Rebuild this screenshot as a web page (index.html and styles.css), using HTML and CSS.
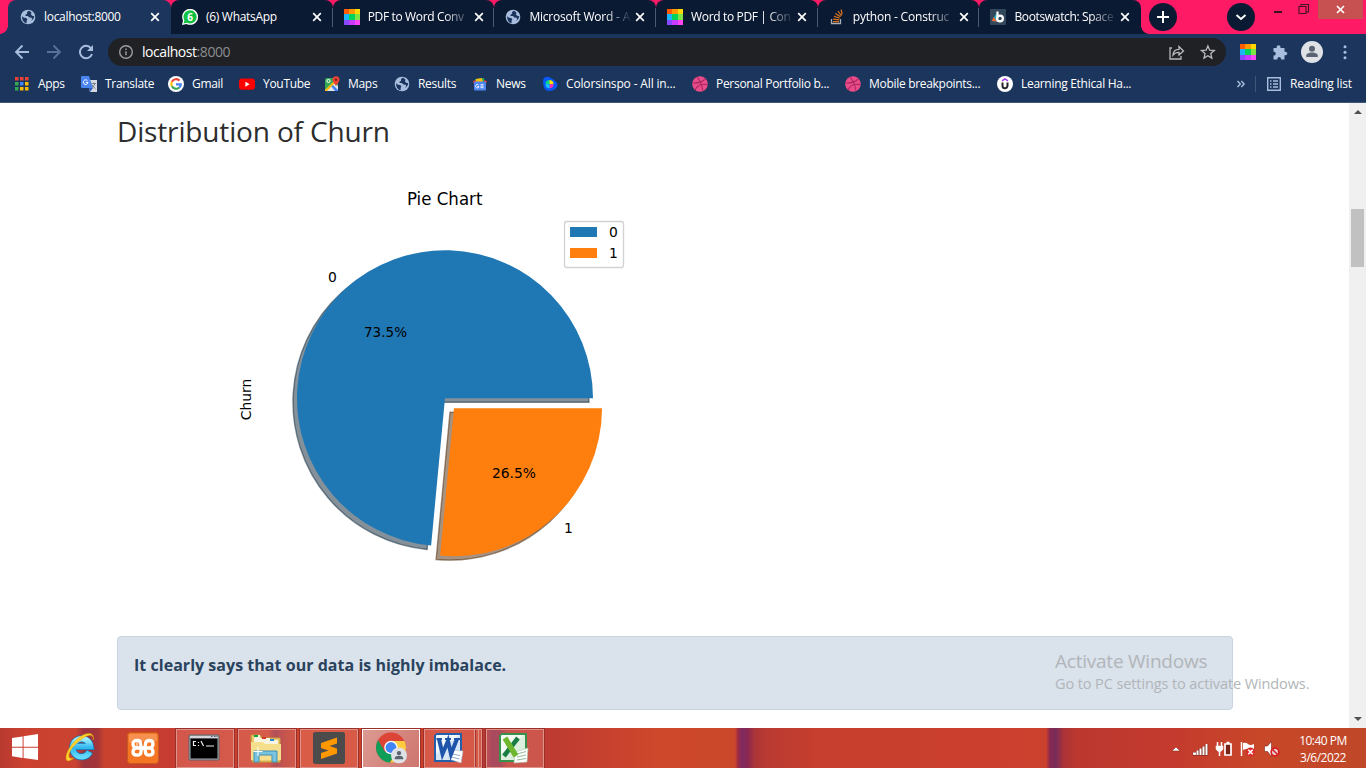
FILE: index.html
```html
<!DOCTYPE html>
<html lang="en">
<head>
<meta charset="utf-8">
<title>localhost:8000</title>
<link rel="stylesheet" href="styles.css">
</head>
<body>
<svg class="defs" width="0" height="0" aria-hidden="true">
  <symbol id="globe" viewBox="0 0 16 16"><circle cx="8" cy="8" r="7.3" fill="#a9bede"/><path d="M2.1 7.2 4 8.7l2.2.2 1.2 1.5-.8 1.4v2.4C3.7 13.7 1.9 11 2.1 7.2zM8.6 1.8 7 3.3l.2 1.5-1.8.9.3 1.2 2.2.2 1.5 1.5 2.2.2.7 1.5-1.4 1.5c1.8-.5 3.2-2.4 3.4-4.5l-2.1-.6-1.4-1.4.8-1.3-1.3-1.6z" fill="#1b355c"/></symbol>
  <symbol id="close" viewBox="0 0 10 10"><path d="M1.2 1.2 8.8 8.8M8.8 1.2 1.2 8.8" stroke="#fff" stroke-width="1.7"/></symbol>
  <symbol id="smallpdf" viewBox="0 0 16 16"><path fill="#ff5a00" d="M0 0h5v5H0z"/><path fill="#ff9900" d="M5 0h6v5H5z"/><path fill="#ffd800" d="M11 0h5v5h-5z"/><path fill="#19b5fe" d="M0 5h5v6H0z"/><path fill="#00d45a" d="M5 5h6v6H5z"/><path fill="#80e544" d="M11 5h5v6h-5z"/><path fill="#8748ff" d="M0 11h5v5H0z"/><path fill="#c93cff" d="M5 11h6v5H5z"/><path fill="#ff45f5" d="M11 11h5v5h-5z"/></symbol>
  <symbol id="dribbble" viewBox="0 0 16 16"><circle cx="8" cy="8" r="7.8" fill="#ea4c89"/><path d="M5 1c3 3.500 5 8 5.800 13.500M.6 7c5 .2 9.500-.8 12.600-4M3 13.800C5.500 9.200 10 7.500 15.300 8.600" fill="none" stroke="#a82760" stroke-width="1.100"/></symbol>
  <symbol id="person" viewBox="0 0 22 22"><circle cx="11" cy="11" r="11" fill="#dee1e6"/><circle cx="11" cy="7.700" r="3" fill="#5b6472"/><path d="M5.200 16v-1.500c0-2 3-3 5.800-3s5.800 1 5.800 3V16z" fill="#5b6472"/></symbol>
</svg>

<header class="browser">
  <div class="tabstrip">
    <div class="tab active"><svg class="ico"><use href="#globe"/></svg><span class="t">localhost:8000</span><svg class="x"><use href="#close"/></svg></div>
    <div class="tab"><svg class="ico" viewBox="0 0 16 16"><path d="M0 16 1 11.500A8 8 0 1 1 4.500 15z" fill="#fff"/><path d="M1.500 14.500 2.400 11.300A6.600 6.600 0 1 1 4.900 13.700z" fill="#12c143"/><text x="8" y="11.800" text-anchor="middle" class="badge">6</text></svg><span class="t">(6) WhatsApp</span><svg class="x"><use href="#close"/></svg></div>
    <div class="tab"><svg class="ico"><use href="#smallpdf"/></svg><span class="t fade">PDF to Word Conv</span><svg class="x"><use href="#close"/></svg></div>
    <div class="tab"><svg class="ico"><use href="#globe"/></svg><span class="t fade wide">Microsoft Word - A</span><svg class="x"><use href="#close"/></svg></div>
    <div class="tab"><svg class="ico"><use href="#smallpdf"/></svg><span class="t fade">Word to PDF | Con</span><svg class="x"><use href="#close"/></svg></div>
    <div class="tab"><svg class="ico" viewBox="0 0 16 16"><path d="M2.500 10v4.500h9V10" fill="none" stroke="#a9adb5" stroke-width="1.300"/><path d="M4 12.600h6M4.200 10.100l6 .7M4.900 7.300l5.700 1.800M6.500 4.500l5 3.300M9 2l3.500 4.800M12 .5l1.200 5" stroke="#d9731e" stroke-width="1.200"/></svg><span class="t fade wide">python - Construc</span><svg class="x"><use href="#close"/></svg></div>
    <div class="tab last"><svg class="ico" viewBox="0 0 16 16"><rect width="16" height="16" rx="1" fill="#33475b"/><path d="M7 3 2 12l5 .5z" fill="#2aa6b8"/><path d="m2 12 1.500-4L7 12.500z" fill="#f26531"/><path d="M7.500 2.500v7" stroke="#fff" stroke-width="2.200"/><circle cx="10" cy="9.500" r="2.900" fill="none" stroke="#fff" stroke-width="2.200"/></svg><span class="t fade">Bootswatch: Space</span><svg class="x"><use href="#close"/></svg></div>
    <svg class="round plus" viewBox="0 0 28 28"><circle cx="14" cy="14" r="14"/><path d="M14 8v12M8 14h12" stroke="#fff" stroke-width="2"/></svg>
    <svg class="round" viewBox="0 0 28 28"><circle cx="14" cy="14" r="14"/><path d="m9.500 12 4.500 4 4.500-4" fill="none" stroke="#fff" stroke-width="1.800"/></svg>
    <svg class="winbtns" viewBox="0 0 97 34"><path d="M5 12h8" stroke="#3a1320" stroke-width="2"/><path d="M30 6.500h7v7h-7zM32 6V4.500h7.500V12H37" fill="none" stroke="#45131f" stroke-width="1.100"/><path fill="#c75050" d="M49 0h45v19H49z"/><path d="m68 6 7 7m0-7-7 7" stroke="#fff" stroke-width="1.700"/></svg>
  </div>
  <div class="toolbar">
    <svg class="nav" viewBox="0 0 109 35"><g fill="none" stroke-width="1.800"><path d="M30 18H17m6.500-6.500L17 18l6.500 6.500" stroke="#a9bede"/><path d="M48 18h13m-6.500-6.500L61 18l-6.500 6.500" stroke="#58719a"/><path d="M92.200 14.500A6.200 6.200 0 1 0 93 20" stroke="#a9bede" stroke-width="2"/></g><path d="M94 11v6h-6z" fill="#a9bede"/></svg>
    <div class="omnibox">
      <svg class="info" viewBox="0 0 16 16"><circle cx="8" cy="8" r="6.300" fill="none" stroke="#9aa0a6" stroke-width="1.400"/><path d="M8 7.200v4M8 4.400V6" stroke="#9aa0a6" stroke-width="1.400"/></svg>
      <span class="url">localhost<i>:8000</i></span>
      <svg class="omni-actions" viewBox="0 0 48 20"><g fill="none" stroke="#b9bbbf" stroke-width="1.300"><path d="M4 6H2v11h11v-3"/><path d="M5 13c.3-4 2.500-5.700 6-5.700V4.500L15.500 9 11 13v-2.700c-2.600 0-4.500.7-6 2.700z"/><path d="m39.900 4 1.800 4.200 4.600.4-3.500 3 1 4.500-3.900-2.400-3.900 2.400 1-4.500-3.500-3 4.600-.4z"/></g></svg>
    </div>
    <svg class="pdf"><use href="#smallpdf"/></svg>
    <svg class="puzzle" viewBox="0 0 16 16"><path d="M1.500 4h3.200C4 .3 9 .3 8.500 4h4v3.700c3.700-.6 3.700 4 0 3.600V15.500H9c.4-3.200-4-3.200-3.600 0H1.500v-4c3 .3 3-4 0-3.600z" fill="#a9bede"/></svg>
    <svg class="avatar"><use href="#person"/></svg>
    <svg class="dots" viewBox="0 0 4 16"><circle cx="2" cy="2.700" r="1.500"/><circle cx="2" cy="8.200" r="1.500"/><circle cx="2" cy="13.700" r="1.500"/></svg>
  </div>
  <nav class="bookmarks">
    <a class="bm apps-link"><svg viewBox="0 0 16 16"><path fill="#ea4335" d="M2 1h3.500v3.500H2zM7 1h3.500v3.500H7zM12 1h3.500v3.500H12z"/><path fill="#34a853" d="M2 6h3.500v3.500H2zM2 11h3.500v3.500H2z"/><path fill="#4285f4" d="M7 6h3.500v3.500H7z"/><path fill="#fbbc05" d="M12 6h3.500v3.500H12zM7 11h3.500v3.500H7zM12 11h3.500v3.500H12z"/></svg>Apps</a>
    <a class="bm"><svg viewBox="0 0 16 16"><path fill="#d5d9df" d="M6 4h10v12H9z"/><path fill="#4a84ee" d="M1 0h7l4 12H1q-1 0-1-1V1q0-1 1-1z"/><path d="M12 12 9 16l-1-4z" fill="#2b5cc4"/><path d="M6.500 4.700A2.300 2.300 0 1 0 7 6.500H4.900" fill="none" stroke="#fff"/><path d="M10.500 7.500H15M12.700 6.500v1M14 7.500q-1 3-3 4m0-2.500q1.500 2.500 3.500 3.500" fill="none" stroke="#6d7989" stroke-width=".9"/></svg>Translate</a>
    <a class="bm"><svg viewBox="0 0 16 16"><circle cx="8" cy="8" r="8" fill="#fff"/><g fill="none" stroke-width="2.200"><path d="M11.500 4.600A4.800 4.800 0 0 0 3.900 5.700" stroke="#ea4335"/><path d="M3.900 5.700a4.800 4.800 0 0 0 0 4.600" stroke="#fbbc05"/><path d="M3.900 10.300a4.800 4.800 0 0 0 7.400 1.200" stroke="#34a853"/><path d="M8 8.300h4.800q0 2-1.500 3.200" stroke="#4285f4"/></g></svg>Gmail</a>
    <a class="bm"><svg viewBox="0 0 16 16"><rect y="2.500" width="16" height="11.300" rx="3" fill="#f00"/><path d="m6.400 5.700 4.200 2.500-4.200 2.500z" fill="#fff"/></svg>YouTube</a>
    <a class="bm"><svg viewBox="0 0 16 16"><rect x="1" y="2" width="13" height="13" rx="1.500" fill="#34a853"/><path d="M1 14 10 6l4 4v4l-1 1H2z" fill="#dfe5ea"/><path d="m8 8 6 6v1h-3L6.500 9.500z" fill="#4285f4"/><path d="m1 14 8-8 1.500 1.500L3 15H1z" fill="#fbbc05"/><path d="M12 10C9 6 8.500 5 8.500 3.800a3.500 3.500 0 0 1 7 0C15.500 5 15 6 12 10z" fill="#ea4335"/><circle cx="12" cy="3.800" r="1.200" fill="#7b1d17"/><circle cx="4.500" cy="5" r="1.600" fill="none" stroke="#fff"/></svg>Maps</a>
    <a class="bm"><svg><use href="#globe"/></svg>Results</a>
    <a class="bm"><svg viewBox="0 0 16 16"><path fill="#18a05e" d="m3 3 9-1 1 4H3z"/><path fill="#ea4335" d="m1 5 3-1v4H2z"/><path fill="#fbbc05" d="m4 3 6-1 1 4H4z"/><path fill="#d33f32" d="m12 4 3 1-1 3h-2z"/><rect x="2" y="5.500" width="12" height="9" rx="1" fill="#4d86ee"/><path d="M6.500 9A1.700 1.700 0 1 0 7 10.500H5.500M8.500 8.700h3M8.500 10.200h3M8.500 11.700h3" fill="none" stroke="#fff" stroke-width=".9"/></svg>News</a>
    <a class="bm colors"><svg viewBox="0 0 16 16"><path d="M1 5C1 1 5 0 8 1.500S15.500 6 15.500 9s-4 6-8.500 6-6-5-6-10z" fill="#0758f5"/><path d="M7.500 8.200V4a4 4 0 0 0-4 4.200z" fill="#00dd85"/><path d="M7.500 8.200V4a4 4 0 0 1 4 4.200z" fill="#ffe600"/><path d="M7.500 8.200h4a4 4 0 0 1-4 4z" fill="#ff2dbb"/><path d="M7.500 8.200h-4a4 4 0 0 0 4 4z" fill="#17c6ff"/></svg>Colorsinspo - All in...</a>
    <a class="bm"><svg><use href="#dribbble"/></svg>Personal Portfolio b...</a>
    <a class="bm"><svg><use href="#dribbble"/></svg>Mobile breakpoints...</a>
    <a class="bm"><svg viewBox="0 0 16 16"><circle cx="8" cy="8" r="8" fill="#fff"/><path d="M5.500 6.500v3.300a2.500 2.500 0 0 0 5 0V6.500" fill="none" stroke="#25252b" stroke-width="2"/><path d="m5 4.800 3-1.900 3 1.900" fill="none" stroke="#a435f0" stroke-width="1.400"/></svg>Learning Ethical Ha...</a>
    <svg class="more" viewBox="0 0 10 10"><path d="m1.500 2 2.800 3-2.800 3m3.800-6L8.100 5 5.300 8" fill="none" stroke="#a9bede" stroke-width="1.400"/></svg>
    <a class="bm reading"><svg viewBox="0 0 16 16"><path d="M1.700 1.700h12.600v12.600H1.700zM4 5h1.500M7 5h5M4 8h1.500M7 8h5M4 11h1.500M7 11h5" fill="none" stroke="#a9bede" stroke-width="1.400"/></svg>Reading list</a>
  </nav>
</header>

<div class="viewport">
  <main class="page">
    <h3>Distribution of Churn</h3>
    <svg class="chart" viewBox="117 166 576 432">
      <g fill-opacity=".5" stroke-opacity=".5" stroke-width="1.400">
        <path d="M441 402.200H589A148 148 0 1 0 427.100 549.500z" fill="#092436" stroke="#092436"/>
        <path d="M450 412.200 436.100 559.500A148 148 0 0 0 598 412.200z" fill="#4c2604" stroke="#4c2604"/>
      </g>
      <path d="M445 398.300H593A148 148 0 1 0 431.100 545.600z" fill="#1f77b4"/>
      <path d="M454 408.300 440.100 555.600A148 148 0 0 0 602 408.300z" fill="#ff7f0e"/>
      <rect x="564.500" y="221.500" width="59" height="46" rx="2.500" fill="#fff" stroke="#d2d2d2" stroke-width="1.300"/>
      <path fill="#1f77b4" d="M570 227h27v10h-27z"/><path fill="#ff7f0e" d="M570 248h27v10h-27z"/>
      <g class="lbl">
        <text x="444.700" y="204.700" class="title" textLength="75.500" lengthAdjust="spacingAndGlyphs">Pie Chart</text>
        <text x="332.300" y="282">0</text><text x="385.500" y="337" textLength="43" lengthAdjust="spacingAndGlyphs">73.5%</text>
        <text x="514" y="478" textLength="44" lengthAdjust="spacingAndGlyphs">26.5%</text><text x="568.300" y="533">1</text>
        <text x="613.500" y="237">0</text><text x="613.500" y="258">1</text>
        <text transform="translate(251 399.500) rotate(-90)">Churn</text>
      </g>
    </svg>
    <div class="alert">It clearly says that our data is highly imbalace.</div>
  </main>
  <div class="scrollbar"><i class="up"></i><i class="thumb"></i><i class="down"></i></div>
  <div class="watermark"><p>Activate Windows</p><p class="sub">Go to PC settings to activate Windows.</p></div>
</div>

<footer class="taskbar">
  <svg class="start" viewBox="0 0 28 28"><path fill="#fff" d="M0 4.200 11 2.500v10.800H0zM12 2.300 27 0v13.300H12zM0 14.300h11v10.500L0 23.200zM12 14.300h15V27l-15-2.100z"/></svg>
  <svg class="ie" viewBox="0 0 30 32"><defs><linearGradient id="ieg" x2="0" y2="1"><stop stop-color="#9ff1ff"/><stop offset=".5" stop-color="#2fb5ef"/><stop offset="1" stop-color="#65d9fb"/></linearGradient></defs><path d="M24.800 20.500A9 9 0 1 1 25.500 15.500H9" fill="none" stroke="#176eae" stroke-width="7"/><path d="M24.600 20.900A9 9 0 1 1 25.500 15.500H9" fill="none" stroke="url(#ieg)" stroke-width="5.600"/><path d="M28.300 9C30-1 18 1 9 11S-1 31 4 29.800c2-.3 4-2 5-3-8 3-6-6 1-13S29-1 28.300 9z" fill="#ffd32b" stroke="#d99a0d" stroke-width=".5"/></svg>
  <svg class="xampp" viewBox="0 0 32 32"><rect x=".5" y=".5" width="31" height="31" rx="3" fill="#f47623" stroke="#c85b19"/><path d="M2 2h28v7Q15 8 2 11z" fill="#fff" opacity=".2"/><path d="M10.500 12.500h-1M13.500 12.500v-1.500q0-2.500-3.500-2.500Q6 8.500 6 12q0 3 3 4-3 1-3 4t4 3.200q4 0 4-3.500 0-3.700 2.200-3.700t2.200-3.500q0-4 3.800-4 3.800 0 3.800 3.500 0 3-3 4 3 1 3 4t-3.800 3.200q-3.800 0-3.800-3.500 0-3.700-2.200-3.700t-2.700-3.500M9 16h4m6.500 0h3.500" fill="none" stroke="#fff" stroke-width="3.300" stroke-linejoin="round"/></svg>
  <div class="apps">
    <div class="app"><svg viewBox="0 0 32 32"><rect x="1" y="3" width="30" height="25" rx="1" fill="#a5aab1" stroke="#5e6267"/><path fill="#d2d4d8" d="M2 4h28v2H2z"/><path fill="#000" d="M2.500 6.500h27v20h-27z"/><path d="M8 9.500H5.500v4H8M10.500 10v1m0 2v1M13 9l2.500 5M18 14h8" fill="none" stroke="#eee" stroke-width="1.200"/><path d="M23 4.500h1.500m1.500 0h1.500m1 0h1" stroke="#475574"/></svg></div>
    <div class="app"><svg viewBox="0 0 32 32"><path d="M1 3h9l2 3h18v24H2z" fill="#e8c96a" stroke="#c39a38"/><path fill="#f8f4df" d="M4 3h6v3h10v2h8v5H4z"/><path fill="#17a33b" d="M4 3h4v2H4z"/><path fill="#d23b2b" d="M12 5h4v2h-4z"/><path fill="#2489d8" d="M20 7h4v2h-4z"/><path fill="#f5df8d" d="M1 10h12l2 2h16v16H1z"/><path d="M4 30V19h23v11h-5v-7H9v7z" fill="#79c3de" stroke="#3f90b5"/><path d="M8 15v9M3.500 19.500h9" stroke="#fff"/></svg></div>
    <div class="app"><svg viewBox="0 0 32 32"><rect width="32" height="32" rx="2.500" fill="#4b4b4b"/><path d="M8 11 24 5.500v6L16.500 14l7.500 2.500v5L8 27v-6l7.500-2.500L8 16z" fill="#ff9800"/></svg></div>
    <div class="app current"><svg viewBox="0 0 32 32"><circle cx="16" cy="15.500" r="15" fill="#db4437"/><path d="M3 8a15 15 0 0 0 12 22.500L22 19l-12 1z" fill="#0f9d58"/><path d="M16 9h13.500A15 15 0 0 1 15 30.500L22.500 19z" fill="#ffcd40"/><circle cx="16" cy="15.500" r="6.800" fill="#fff"/><circle cx="16" cy="15.500" r="5.400" fill="#4285f4"/><use href="#person" x="16" y="15.500" width="16" height="16"/></svg></div>
    <div class="app word"><svg viewBox="0 0 32 32"><path d="M4 2h24v25l-2 2H2V4z" fill="#d6e6f5" stroke="#255fa9" stroke-width="2"/><path d="M3 3h23L3 22z" fill="#fff" opacity=".7"/><path d="m17 18 13 1-2 12-12-4z" fill="#fff" stroke="#aebed1" stroke-width=".6"/><path d="m19 22 8 1.500M18.500 25l8 2" stroke="#8caad2"/><path d="m6 7 3.500 15L15 9l3 13 6-15" fill="none" stroke="#1e55ab" stroke-width="4"/><path d="M3.500 7H9m3 0h6m3 0h6" stroke="#1e55ab" stroke-width="2"/></svg></div>
    <div class="app excel"><svg viewBox="0 0 32 32"><path d="M4 2h24v25l-2 2H2V4z" fill="#dceedd" stroke="#36914a" stroke-width="2"/><path d="M3 3h23L3 22z" fill="#fff" opacity=".7"/><path d="m17 20 13-4-1 14-13 1z" fill="#fff" stroke="#a4c8a8" stroke-width=".6"/><path d="m19 22 9-2.500M19 25l9-2M19 28l9-1.500" stroke="#91ba96"/><path d="M20 6 6 24" stroke="#197c42" stroke-width="4.500"/><path d="m7 6 11 18" stroke="#6eb62e" stroke-width="5.500"/></svg></div>
  </div>
  <svg class="tray" viewBox="0 0 112 18"><path d="m1 11 4-4 4 4z" fill="#fff" stroke="#782418" stroke-width=".5"/><path d="M23.500 12v3.500m3-5v5m3-7v7m3-9v9m3-11.500v11.500" stroke="#782418" stroke-width="3.400"/><path d="M22 13.500h3M23.500 12.500V15m3-4.500V15m3-6.500V15m3-8.500V15m3-11v11" stroke="#fff" stroke-width="2"/><path d="M46.500 2v4m4-4v4m-5 .5h6V9l-2 2h-2l-2-2zm3 4V16" stroke="#fff" stroke-width="1.500" fill="#fff"/><path d="M54 4h6v11h-6zM55.500 2.500h3" stroke="#fff" stroke-width="1.700" fill="#782418"/><path d="M70.500 2v14" stroke="#fff" stroke-width="1.500"/><path d="M72 3q3-1 5 1t6 0v7q-3 1-5-1t-6 0z" fill="#fff"/><circle cx="79.500" cy="12" r="4.500" fill="#dc2b2b"/><path d="m77.300 9.800 4.400 4.400m0-4.400-4.400 4.400" stroke="#fff" stroke-width="1.600"/><path d="M93.500 6h3l4-4.500v15l-4-5h-3z" fill="#fff" stroke="#782418" stroke-width=".6"/><circle cx="104" cy="12" r="3.800" fill="#e8dcda" stroke="#d71e22" stroke-width="1.800"/><path d="m101.500 9.500 5 5" stroke="#d71e22" stroke-width="1.600"/></svg>
  <div class="clock"><span>10:40 PM</span><span>3/6/2022</span></div>
</footer>
</body>
</html>
```

FILE: styles.css
```css
* { box-sizing: border-box; }
body { margin: 0; width: 1366px; height: 768px; overflow: hidden; display: flex; flex-direction: column; background: #fff; font-family: "Open Sans", "Noto Sans", sans-serif; }
svg { display: block; flex: none; }
.defs { position: absolute; }

/* browser chrome */
.browser { height: 103px; background: #1b355c; border-bottom: 1px solid #3d5779; color: #fff; font-size: 12px; letter-spacing: -.3px; }
.tabstrip { height: 34px; display: flex; background: linear-gradient(#ff1a66 0 17px, #0b1a33 17px) 171px 0 / 966px 34px no-repeat #ff1a66; padding-left: 8px; }
.tab { width: 161.700px; height: 34px; display: flex; align-items: center; padding-left: 11px; background: #0b1a33; border-radius: 8px 8px 0 0; position: relative; flex: none; }
.tab + .tab::after { content: ""; position: absolute; right: 0; top: 8px; width: 1px; height: 19px; background: #4b5a70; }
.tab.last::after { display: none; }
.tab.active { width: 163px; padding-left: 12px; background: #1b355c; }
.tab.active::before { content: ""; position: absolute; left: -8px; bottom: 0; width: 8px; height: 8px; background: radial-gradient(circle at 0 0, transparent 7.500px, #1b355c 8px); }
.tab.last::before { content: ""; position: absolute; right: -8px; bottom: 0; width: 8px; height: 8px; background: radial-gradient(circle at 100% 0, transparent 7.500px, #0b1a33 8px); }
.tab.active + .tab { border-bottom-left-radius: 8px; }
.ico { width: 16px; height: 16px; margin-right: 8px; }
.t { width: 106px; white-space: nowrap; line-height: 18px; }
.fade { letter-spacing: -.35px; -webkit-mask-image: linear-gradient(90deg, #000 76px, transparent 103px); mask-image: linear-gradient(90deg, #000 76px, transparent 103px); }
.wide { letter-spacing: -.2px; }
.x { width: 10px; height: 10px; }
.badge { font: bold 10px "Open Sans", sans-serif; fill: #fff; letter-spacing: 0; }
.round { width: 28px; height: 28px; margin: 3px 0 0 50px; fill: #0b1a33; }
.round.plus { margin-left: 8px; }
.winbtns { width: 97px; height: 34px; margin-left: 14px; }

.toolbar { height: 35px; display: flex; align-items: center; }
.nav { width: 109px; height: 35px; margin-left: -1px; }
.omnibox { width: 1118px; height: 28px; border-radius: 14px; background: #202124; display: flex; align-items: center; padding: 0 10px; margin-top: 1px; }
.info { width: 16px; height: 16px; }
.url { flex: 1; padding-left: 8px; font-size: 14px; letter-spacing: -.45px; line-height: 20px; }
.url i { font-style: normal; color: #8b8d91; }
.omni-actions { width: 48px; height: 20px; }
.pdf { width: 16px; height: 16px; margin-left: 14px; }
.puzzle { width: 16px; height: 16px; margin-left: 16px; }
.avatar { width: 22px; height: 22px; margin-left: 13px; }
.dots { width: 4px; height: 16px; margin-left: 20px; fill: #a9bede; }

.bookmarks { height: 33px; display: grid; align-items: center; padding: 0 0 3px 13px; grid-template-columns: 68px 87px 71px 85px 70px 78px 70px 150px 153px 152px 239px 19px 1fr; }
.bm { display: flex; align-items: center; gap: 8px; white-space: nowrap; line-height: 18px; }
.bm svg { width: 16px; height: 16px; }
.apps-link { gap: 9px; }
.colors { letter-spacing: -.15px; }
.more { width: 10px; height: 10px; }
.reading { border-left: 1px solid #3d5779; height: 16px; padding-left: 10px; letter-spacing: -.2px; }

/* page */
.viewport { height: 625px; display: flex; position: relative; }
.page { flex: 1; padding: 11px 116px 0 117px; }
h3 { margin: 0; font-size: 28px; line-height: 34px; font-weight: 400; letter-spacing: -.15px; color: #2d2d2d; }
.chart { width: 576px; height: 432px; margin: 18px 0 38px; }
.lbl { font-family: "DejaVu Sans", sans-serif; font-size: 13.890px; text-anchor: middle; fill: #000; }
.title { font-size: 17.300px; }
.alert { height: 74px; border: 1px solid #c7d4e1; border-radius: 4px; background: #dae2eb; color: #29425d; font-size: 16px; line-height: 24px; font-weight: 700; letter-spacing: .03px; padding: 16px; }
.scrollbar { width: 17px; background: #f0f0f0; display: flex; flex-direction: column; align-items: center; }
.up, .down { width: 0; height: 0; border: solid transparent; border-width: 0 4px; }
.up { border-bottom: 4px solid #505050; margin-top: 7px; }
.thumb { width: 13px; height: 58px; background: #c1c1c1; margin: 95px 0 auto; }
.down { border-top: 4px solid #505050; margin-bottom: 7px; }
.watermark { position: absolute; left: 1055px; top: 545px; color: #b1b5b9; white-space: nowrap; }
.watermark p { margin: 0; font-size: 19px; line-height: 27px; font-weight: 400; letter-spacing: -.23px; }
.watermark .sub { font-size: 14.500px; line-height: 18px; letter-spacing: -.1px; }

/* taskbar */
.taskbar { height: 40px; display: flex; align-items: center; background: linear-gradient(90deg, #b73a2f 0, #cc4130 25px, #ca4330 76px, #9c3440 84px, #a43537 98px, #c9432e 104px, #c63c31 170px, #c94330 268px, #9b3443 275px, #b53a34 285px, #cd432c 300px, #c83e2c 480px, #8f2b4a 492px, #8e2d48 500px, #bb3b34 508px, #bd3b32 550px, #c6402f 600px, #ce482b 660px, #cb482b 735px, #9d2b42 738px, #7e2b60 742px, #8b2750 748px, #a93439 754px, #b93a32 765px, #c73f2e 820px, #cb3f2e 1000px, #cc402e 1046px, #872950 1050px, #772c5b 1056px, #a83239 1063px, #bb382f 1075px, #c43a2e 1170px, #c84728 1260px, #bf4829 1366px); }
.start { width: 27px; height: 27px; margin: 0 0 1px 12px; }
.ie { width: 30px; height: 32px; margin: 0 0 2px 26px; }
.xampp { width: 32px; height: 32px; margin: 0 17px 0 32px; }
.apps { display: flex; gap: 4px; height: 39px; flex: 1; }
.app { width: 58px; height: 39px; border: 1px solid #e0938a; background: rgba(255,170,160,.24); box-shadow: 0 0 0 1px #9c3028; display: flex; justify-content: center; align-items: center; }
.app svg { width: 32px; height: 32px; margin-right: 2px; }
.app:nth-child(3) svg, .current svg { margin-right: 0; }
.current { border-color: #fff; background: linear-gradient(120deg, #dc9a92, #ce756e); }
.word { padding-right: 7px; background: linear-gradient(90deg, transparent 49px, #e0938a 49px 50px, #a23a30 50px 51px, transparent 51px 53px, #e0938a 53px 54px, transparent 54px), rgba(255,170,160,.24); }
.tray { width: 112px; height: 18px; margin: 2px 6px 0 0; }
.clock { width: 68px; margin-right: 9px; display: flex; flex-direction: column; align-items: center; color: #fff; font-size: 12px; line-height: 17px; letter-spacing: -.5px; padding-top: 2px; }
```
